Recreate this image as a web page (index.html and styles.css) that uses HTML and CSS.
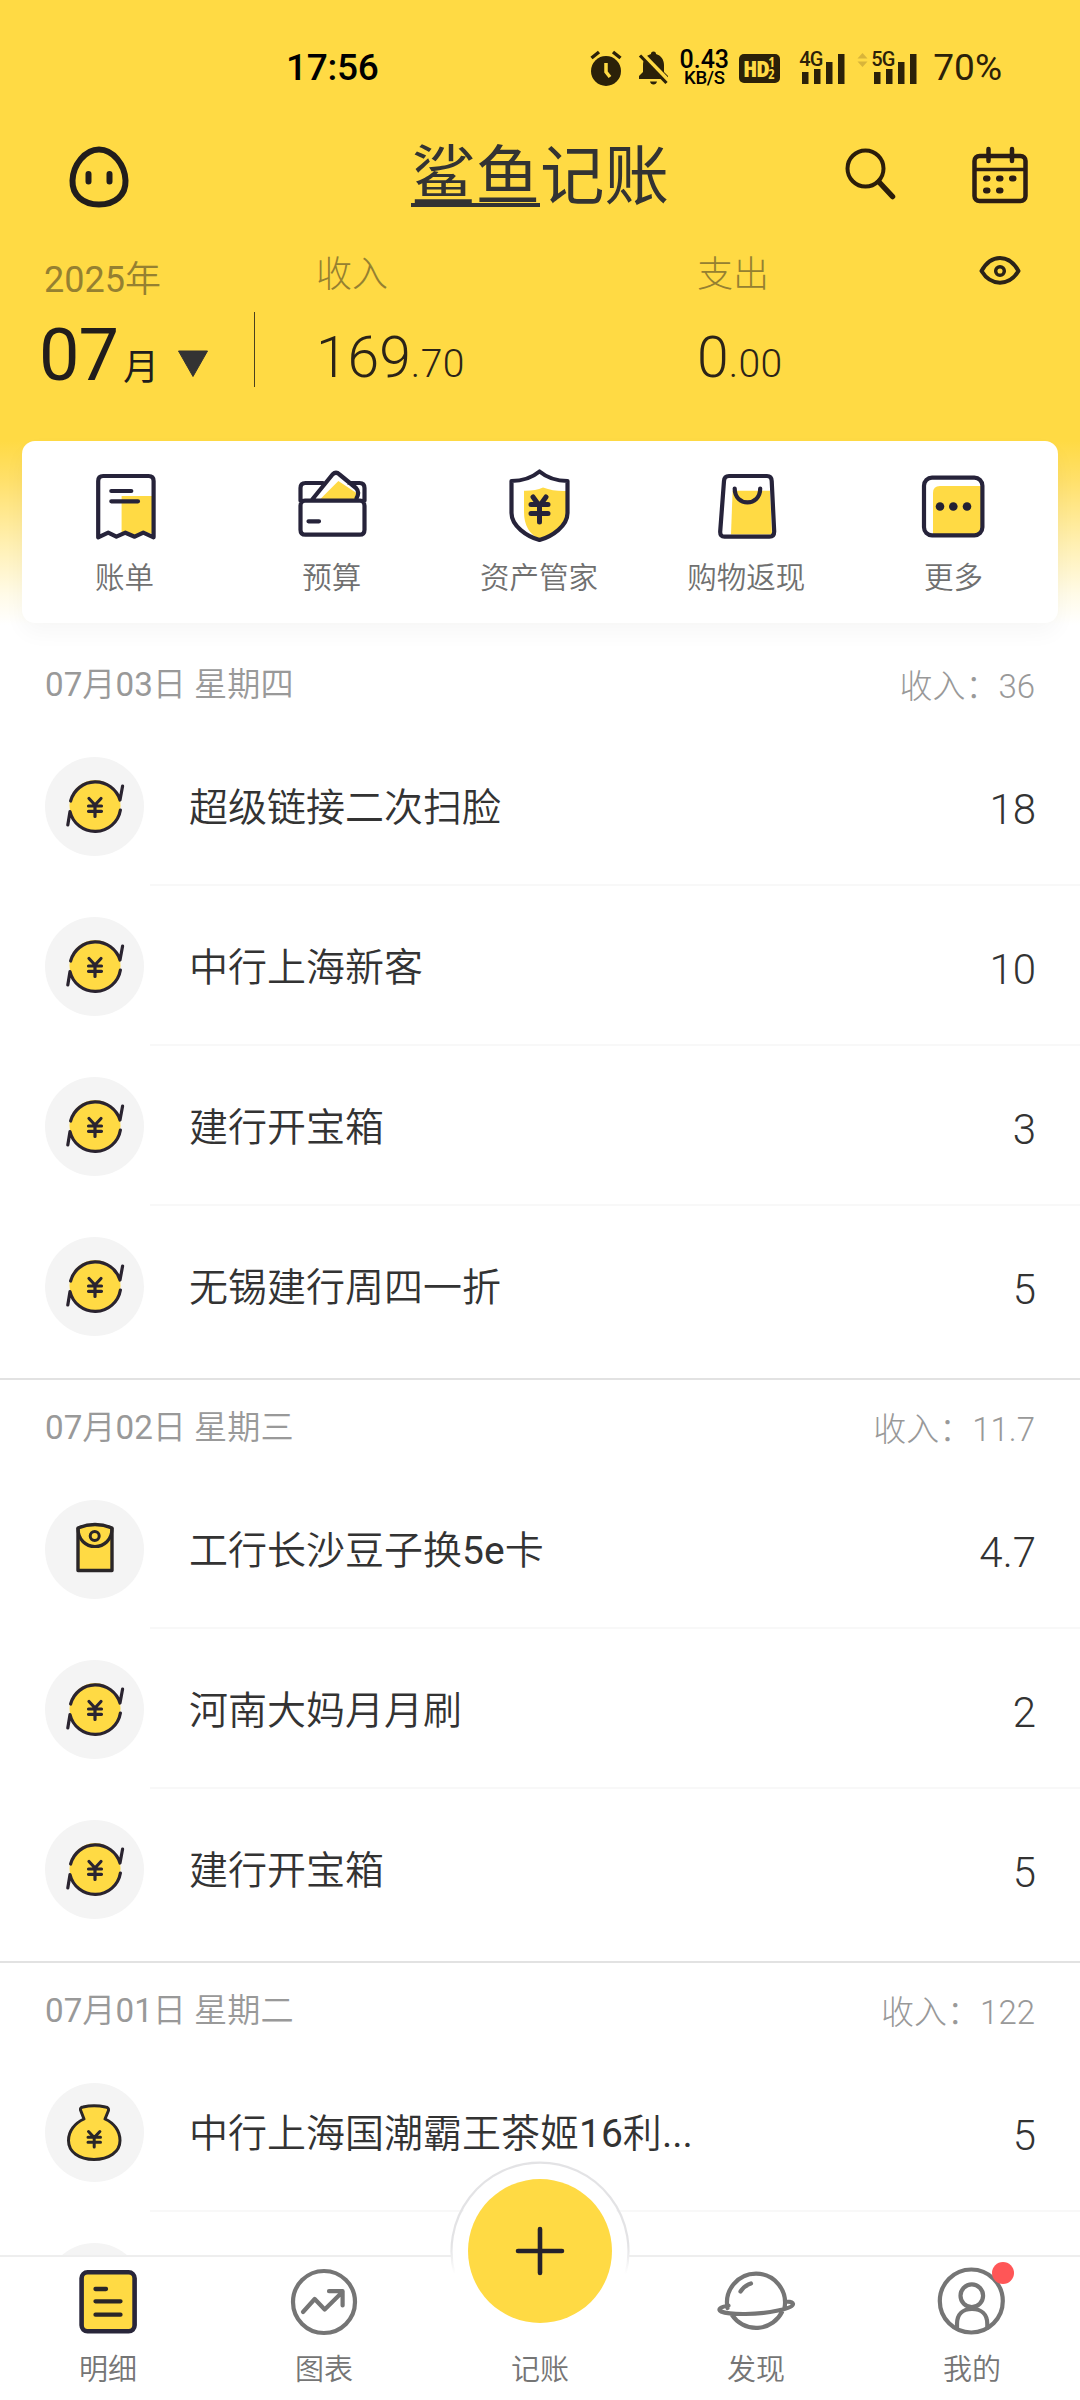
FILE: index.html
```html
<!DOCTYPE html>
<html lang="zh-CN">
<head>
<meta charset="utf-8">
<title>鲨鱼记账</title>
<link rel="stylesheet" href="styles.css">
</head>
<body>
<svg class="defs" aria-hidden="true">
  <symbol id="coin" viewBox="0 0 99 99">
    <circle cx="50" cy="48.5" r="25.5" fill="#ffda44"/>
    <path d="M25.6 44A25.7 25.7 0 0 1 75 43L77.6 29M22.8 68L25 54.5A25.7 25.7 0 0 0 75.4 53" fill="none" stroke="#2a2430" stroke-width="3.2" stroke-linecap="round" stroke-linejoin="round"/>
    <path d="M44 41.5l6 6.5 6-6.5M50 48v11.500M43.500 49h13M43.500 54.300h13" fill="none" stroke="#2a2430" stroke-width="3.200" stroke-linecap="round"/>
  </symbol>
  <symbol id="packet" viewBox="0 0 99 99">
    <path d="M33 28Q50 21 67 28V70.500H33Z" fill="#ffda44" stroke="#2a2628" stroke-width="3.400" stroke-linejoin="round"/>
    <path d="M33 28C33 40 41 46.500 50 46.500S67 40 67 28" fill="none" stroke="#2a2628" stroke-width="3.200"/>
    <circle cx="49.700" cy="36" r="4.500" fill="none" stroke="#2a2628" stroke-width="3"/>
  </symbol>
  <symbol id="bag" viewBox="0 0 99 99">
    <path d="M39 36L35.500 27Q35 24.500 38 24Q49 21.500 60.500 24Q64 24.500 63.500 27.500L60 36C69 40 75 48 75 57.500C75 69 64 76.500 49 76.500S23.500 69 23.500 57.500C23.500 48 30 40 39 36Z" fill="#ffda44" stroke="#2a2628" stroke-width="3" stroke-linejoin="round"/>
    <path d="M43.500 48.500l5.700 6 5.700-6M49.200 54.500v9.500M43 54.300h12.500M43 59.300h12.500" fill="none" stroke="#2a2628" stroke-width="3" stroke-linecap="round"/>
  </symbol>
</svg>

<div class="app">
  <header class="header">
    <div class="status">
      <div class="clock">17:56</div>
      <div class="status-icons">
        <svg width="32" height="36" viewBox="0 0 32 36"><circle cx="16" cy="21" r="15" fill="#2b2109"/><path d="M1.500 8L9 2M30.500 8L23 2" stroke="#2b2109" stroke-width="3.500"/><path d="M16 13v9l4 5" fill="none" stroke="#ffda44" stroke-width="3.500"/></svg>
        <svg class="bell" width="31" height="36" viewBox="0 0 31 36"><path d="M15.500 1.500c1.800 0 2.500 1 2.500 2.500 5 1.500 8 5.500 8 11v7l4 4v3H1v-3l4-4v-7c0-5.500 3-9.500 8-11 0-1.500.7-2.500 2.500-2.500zM12 31.500h7c-.5 2-1.500 3-3.500 3s-3-1-3.500-3z" fill="#2b2109"/><path d="M3.500 3L31 31" stroke="#ffda44" stroke-width="4"/><path d="M2 5.500L28.500 33" stroke="#2b2109" stroke-width="3.200"/></svg>
        <div class="speed"><b>0.43</b><span>KB/S</span></div>
        <div class="hd"><b>HD</b><span><i>1</i><i>2</i></span></div>
        <div class="signal"><span>4G</span><svg width="44" height="32" viewBox="0 0 44 32"><path d="M0 19h6.500v12H0zM12 16h6.500v15H12zM24 9h6.500v22H24zM36 1h6.500v30H36z" fill="#2b2109"/></svg></div>
        <svg class="arrows" width="11" height="16" viewBox="0 0 11 16"><path d="M5.500 1l5 5.500h-10zM5.500 15l5-5.500h-10z" fill="#d8b43a"/></svg>
        <div class="signal"><span>5G</span><svg width="44" height="32" viewBox="0 0 44 32"><path d="M0 19h6.500v12H0zM12 16h6.500v15H12zM24 9h6.500v22H24zM36 1h6.500v30H36z" fill="#2b2109"/></svg></div>
        <div class="battery">70%</div>
      </div>
    </div>

    <div class="titlebar">
      <svg class="face" width="62" height="62" viewBox="0 0 62 62"><path d="M31 3.500C45 3.500 57 19 57.500 34.500C58 49 47 58.500 31 58.500S4 49 4.500 34.500C5 19 17 3.500 31 3.500Z" fill="none" stroke="#211d1c" stroke-width="6"/><path d="M20.500 28v7.500M41.500 28v7.500" stroke="#211d1c" stroke-width="6" stroke-linecap="round"/></svg>
      <h1 class="logo"><span>鲨鱼</span>记账</h1>
      <svg class="search" width="56" height="56" viewBox="0 0 56 56"><circle cx="23.500" cy="22.500" r="18" fill="none" stroke="#2b1d0a" stroke-width="4"/><path d="M37 36L50.500 50.500" stroke="#2b1d0a" stroke-width="5.500" stroke-linecap="round"/></svg>
      <svg class="calendar" width="58" height="60" viewBox="0 0 58 60"><rect x="3.500" y="11" width="51" height="45" rx="5" fill="none" stroke="#2b1d14" stroke-width="4.500"/><path d="M3.500 24.500h51" stroke="#2b1d14" stroke-width="3.500"/><path d="M17.500 4v12M41 4v12" stroke="#2b1d14" stroke-width="4.500" stroke-linecap="round"/><path d="M15 33.500h1.500M28 33.500h1.500M41 33.500h1.500M15 45.500h1.500M28 45.500h1.500" stroke="#2b1d14" stroke-width="6" stroke-linecap="round"/></svg>
    </div>

    <div class="summary">
      <div class="month">
        <div class="year"><span class="num">2025</span>年</div>
        <div class="month-value"><strong>07</strong><span>月</span><svg width="32" height="28" viewBox="0 0 32 28"><path d="M1.500 1h29L16 26.500z" fill="#333" stroke="#333" stroke-linejoin="round"/></svg></div>
      </div>
      <div class="stat income"><span class="stat-label">收入</span><div class="stat-value">169<small>.70</small></div></div>
      <div class="stat"><span class="stat-label">支出</span><div class="stat-value">0<small>.00</small></div></div>
      <svg class="eye" width="44" height="32" viewBox="0 0 44 32"><path d="M3.500 16C13 -1.500 31 -1.500 40.500 16C31 31.500 13 31.500 3.500 16Z" fill="none" stroke="#2b2318" stroke-width="4" stroke-linejoin="round"/><circle cx="22" cy="16" r="4.300" fill="none" stroke="#2b2318" stroke-width="3.500"/></svg>
    </div>

    <nav class="shortcuts">
      <a class="shortcut">
        <svg viewBox="0 0 80 80"><path d="M35.600 30H66v38l-8.700-3-8.600 4-9.300-4-3.800 2z" fill="#ffda44"/><path d="M12.200 71.300V15q0-5 5-5H62.600q5 0 5 5V71.300L57.300 66.700L48.700 70.700L39.400 66.700L30.400 70.700L22.200 66.700Z" class="ln"/><path d="M25.300 25H45.300M25.300 35.300H52" class="ln"/></svg>
        <span>账单</span></a>
      <a class="shortcut">
        <svg viewBox="0 0 80 80"><path d="M45.400 15L27.400 33H62L63.500 27Z" fill="#ffda44"/><path d="M7.500 34.700V22q0-5 5-5H30M56 17h10.500q5 0 5 5v12.700M12 34.700H67q4.500 0 4.500 5V63.700q0 5-5 5H12.500q-5 0-5-5V39.500q0-4.800 4.500-4.800ZM18.800 34L39.500 8.500Q43 5 46.500 8.500L63 22Q67 26 63.600 32M15.500 55.300H26" class="ln"/></svg>
        <span>预算</span></a>
      <a class="shortcut">
        <svg viewBox="0 0 80 80"><path d="M24 24.700Q35 25 43 21.500Q54 25.500 66 25V46C66 61 51 70 40 73.500Q24 66 24 46Z" fill="#ffda44"/><path d="M39.500 5.500Q28 15 11.500 15V47C11.500 60 27 70.500 39.500 74C52 70.500 67.500 60 67.500 47V15Q51 15 39.500 5.500Z" class="ln"/><path d="M33 31l6.500 9 6.500-9M39.500 40v16M31 38.500h17M31 47.500h17" class="ln yen"/></svg>
        <span>资产管家</span></a>
      <a class="shortcut">
        <svg viewBox="0 0 80 80"><path d="M25.600 24.700H63L65 68.500H24Z" fill="#ffda44"/><path d="M22 10H60Q64.500 10 64.700 15L67.200 65.500Q67.200 70.700 62.500 70.700H17.500Q13 70.700 13.200 65.500L17 15Q17.300 10 22 10ZM27.700 22.500C27.700 41 53.200 41 53.200 22.500" class="ln"/></svg>
        <span>购物返现</span></a>
      <a class="shortcut">
        <svg viewBox="0 0 80 80"><path d="M26 20H67V68H19V27Q19 20 26 20Z" fill="#ffda44"/><rect x="10" y="11.700" width="58.400" height="57.600" rx="8" class="ln"/><g fill="#222033"><circle cx="26" cy="40.500" r="4.300"/><circle cx="39.300" cy="40.500" r="4.300"/><circle cx="53" cy="40.500" r="4.300"/></g></svg>
        <span>更多</span></a>
    </nav>
  </header>

  <main class="list">
    <section class="day">
      <div class="day-head"><span><span class="num">07</span>月<span class="num">03</span>日 星期四</span><span class="total">收入：36</span></div>
      <div class="row"><svg class="ico"><use href="#coin"/></svg><div class="row-body"><span class="name">超级链接二次扫脸</span><span class="amount">18</span></div></div>
      <div class="row"><svg class="ico"><use href="#coin"/></svg><div class="row-body"><span class="name">中行上海新客</span><span class="amount">10</span></div></div>
      <div class="row"><svg class="ico"><use href="#coin"/></svg><div class="row-body"><span class="name">建行开宝箱</span><span class="amount">3</span></div></div>
      <div class="row"><svg class="ico"><use href="#coin"/></svg><div class="row-body"><span class="name">无锡建行周四一折</span><span class="amount">5</span></div></div>
    </section>
    <section class="day">
      <div class="day-head"><span><span class="num">07</span>月<span class="num">02</span>日 星期三</span><span class="total">收入：11.7</span></div>
      <div class="row"><svg class="ico"><use href="#packet"/></svg><div class="row-body"><span class="name">工行长沙豆子换<span class="num">5e</span>卡</span><span class="amount">4.7</span></div></div>
      <div class="row"><svg class="ico"><use href="#coin"/></svg><div class="row-body"><span class="name">河南大妈月月刷</span><span class="amount">2</span></div></div>
      <div class="row"><svg class="ico"><use href="#coin"/></svg><div class="row-body"><span class="name">建行开宝箱</span><span class="amount">5</span></div></div>
    </section>
    <section class="day">
      <div class="day-head"><span><span class="num">07</span>月<span class="num">01</span>日 星期二</span><span class="total">收入：122</span></div>
      <div class="row"><svg class="ico"><use href="#bag"/></svg><div class="row-body"><span class="name">中行上海国潮霸王茶姬<span class="num">16</span>利<span class="num">...</span></span><span class="amount">5</span></div></div>
      <div class="row"><svg class="ico"></svg><div class="row-body"></div></div>
    </section>
  </main>

  <nav class="tabs">
    <a class="tab"><svg viewBox="0 0 80 80"><rect x="13.600" y="10.300" width="53" height="59" rx="6" fill="#ffda44" stroke="#29263a" stroke-width="4.600"/><path d="M27.500 27H38M27.500 39.300H52.500M27.500 52.700H52.500" stroke="#2a2628" stroke-width="4.300" stroke-linecap="round"/></svg><span>明细</span></a>
    <a class="tab"><svg viewBox="0 0 80 80" class="gray"><circle cx="40" cy="40" r="31"/><path d="M19 50L30.700 37L40.700 47.500L58.600 29.700M45 29.200H58.600V43.500"/></svg><span>图表</span></a>
    <a class="tab tab-add">
      <svg class="fab" width="182" height="120" viewBox="0 0 182 120"><defs><linearGradient id="fade" x1="0" y1="0" x2="0" y2="1"><stop offset=".75" stop-color="#e3e3e5"/><stop offset="1" stop-color="#fff"/></linearGradient></defs><path d="M5 116A88.500 88.500 0 1 1 177 116Z" fill="#fff"/><path d="M5.500 114A88.500 88.500 0 1 1 176.500 114" fill="none" stroke="url(#fade)" stroke-width="2.200"/></svg>
      <svg class="plus" width="144" height="144" viewBox="0 0 144 144"><circle cx="72" cy="72" r="72" fill="#ffda44"/><path d="M50 72H94M72 50V94" stroke="#25222c" stroke-width="4.600" stroke-linecap="round"/></svg>
      <span>记账</span></a>
    <a class="tab"><svg viewBox="0 0 80 80" class="gray"><path d="M11.500 46A29 29 0 1 1 68.500 46M16 53A29 29 0 0 0 66 50M12.500 43.500C4 45 1.500 47.500 5 49.500C14 53 42 53 62 48.500C72 46.500 77 44.500 77 42C76.500 39.500 72 39.500 69 39.700M24.500 29.500Q28.500 23.500 35 21.500"/></svg><span>发现</span></a>
    <a class="tab"><svg viewBox="0 0 80 80" class="gray"><circle cx="39.300" cy="39" r="31.500"/><circle cx="39.800" cy="33.700" r="11.300"/><path d="M25 66.500V62C25 52 31 47 40 47S55.300 52 55.300 62V66"/></svg><i class="badge"></i><span>我的</span></a>
  </nav>
</div>
</body>
</html>
```
FILE: styles.css
```css
* { box-sizing: border-box; }

body {
  margin: 0;
  background: #fff;
  color: #333;
  font-family: Roboto, "Noto Sans CJK SC", sans-serif;
}

svg { display: block; flex: none; }
i { font-style: normal; }
.defs { display: none; }
.num { font-weight: 400; }

.app {
  position: relative;
  width: 1080px;
  height: 2400px;
  overflow: hidden;
}

/* Header */
.header {
  height: 637px;
  padding: 0 22px;
  background: linear-gradient(#ffda44 0, #ffda44 441px, #ffe06a 480px, #fff0b3 545px, #fffbe8 595px, #fff 625px);
}

.status {
  display: flex;
  justify-content: space-between;
  height: 136px;
  padding: 0 56px 0 264px;
  align-items: center;
  color: #000;
}
.clock { font-size: 37px; font-weight: 500; line-height: 44px; letter-spacing: -.3px; }
.status-icons { display: flex; align-items: center; color: #2b2109; }
.bell { margin-left: 16px; }
.speed {
  display: flex;
  flex-direction: column;
  align-items: center;
  width: 52px;
  margin: 0 0 1px 9px;
  color: #000;
  font-weight: 500;
}
.speed b { font-size: 25px; font-weight: 500; line-height: 21px; }
.speed span { font-size: 18.500px; line-height: 17px; letter-spacing: -.3px; }
.hd {
  display: flex;
  align-items: center;
  width: 41px;
  height: 29px;
  margin-left: 9px;
  padding-left: 4px;
  border-radius: 5px;
  background: #2b2109;
  color: #ffda44;
  font: 700 23px/29px "Open Sans", sans-serif;
  font-stretch: 75%;
}
.hd b { width: 25px; letter-spacing: -1px; }
.hd span { display: flex; flex-direction: column; font-size: 14px; line-height: 12px; }
.signal { width: 47px; height: 34px; margin-left: 19px; font-weight: 500; }
.signal span { display: block; height: 0; font-size: 20px; line-height: 17px; letter-spacing: -1px; }
.signal svg { margin: 2px 0 0 3px; }
.arrows { align-self: center; margin: -17px 0 0 11px; }
.arrows + .signal { margin-left: 3px; }
.battery { margin-left: 15px; font-size: 37px; line-height: 44px; }

.titlebar { display: flex; height: 110px; padding-left: 46px; }
.face { margin-top: 10px; }
.logo {
  margin: 5px 0 0 281px;
  width: 260px;
  font-size: 64.500px;
  font-weight: 400;
  line-height: 72px;
  white-space: nowrap;
}
.logo span { display: inline-block; height: 66px; border-bottom: 4px solid #333; }
.search { margin: 10px 0 0 171px; }
.calendar { margin: 9px 0 0 73px; }

.summary { display: flex; height: 195px; }
.month { width: 233px; padding: 12px 0 0 22px; position: relative; }
.month::after {
  content: "";
  position: absolute;
  right: 0;
  top: 66px;
  width: 1.500px;
  height: 75px;
  background: #4a401f;
}
.year { font-size: 36px; font-weight: 350; line-height: 44px; color: #958031; }
.month-value { display: flex; align-items: baseline; height: 90px; margin-top: 9px; margin-left: -5px; color: #211d1c; }
.month-value strong { font-size: 72px; font-weight: 400; line-height: 90px; letter-spacing: -1px; }
.month-value span { margin-left: 5px; font-size: 36px; line-height: 44px; }
.month-value svg { margin-left: 18px; align-self: flex-start; margin-top: 39px; }
.stat { padding-top: 7px; width: 281px; }
.stat.income { width: 442px; padding-left: 61px; }
.stat-label { display: block; font-size: 36px; line-height: 44px; color: #958031; font-weight: 300; }
.stat-value { margin-top: 21px; font-size: 57px; font-weight: 300; line-height: 80px; color: #2b2318; }
.stat-value small { font-size: 39px; letter-spacing: .5px; }
.eye { margin-top: 9px; }

.shortcuts {
  display: flex;
  height: 182px;
  border-radius: 13px;
  background: #fff;
  box-shadow: 0 10px 22px rgba(0, 0, 0, .035);
}
.shortcut {
  flex: 1;
  display: flex;
  flex-direction: column;
  align-items: center;
  padding-top: 25px;
  color: #707070;
  font-size: 29.500px;
  line-height: 40px;
  font-weight: 350;
}
.shortcut svg { width: 80px; height: 80px; margin-bottom: 12px; }
.shortcut span { margin-right: 2px; }
.ln { fill: none; stroke: #26233a; stroke-width: 4.200; stroke-linecap: round; stroke-linejoin: round; }
.ln.yen { stroke-width: 5; }

/* Daily records */
.day { padding-bottom: 12px; border-bottom: 2px solid #e2e2e2; }
.day-head {
  display: flex;
  justify-content: space-between;
  height: 89px;
  padding: 26px 45px 0 45px;
  color: #999;
  font-size: 33.200px;
  font-weight: 350;
  line-height: 44px;
}
.total { padding-top: 2px; font-size: 33px; font-weight: 300; }
.row { display: flex; height: 160px; padding-left: 45px; }
.ico { width: 99px; height: 99px; margin: 31px 6px 0 0; border-radius: 50%; background: #f4f4f4; }
.row-body {
  flex: 1;
  display: flex;
  justify-content: space-between;
  align-items: flex-start;
  padding: 54px 44px 0 39px;
  border-bottom: 2px solid #f8f8f8;
}
.row:last-child .row-body { border-bottom: 0; }
.name { padding-top: 2px; font-size: 39px; line-height: 52px; font-weight: 350; }
.amount { font-size: 42px; line-height: 60px; font-weight: 300; }

/* Bottom tab bar */
.tabs {
  position: absolute;
  left: 0;
  bottom: 0;
  display: flex;
  width: 100%;
  height: 145px;
  border-top: 2px solid #eee;
  background: #fff;
}
.tab {
  position: relative;
  flex: 1;
  display: flex;
  flex-direction: column;
  align-items: center;
  padding-top: 5px;
  color: #757575;
  font-size: 29px;
  line-height: 40px;
  font-weight: 350;
}
.tab > svg { width: 80px; height: 80px; }
.tab > span { margin-top: 8px; }
.gray { fill: none; stroke: #757575; stroke-width: 4.200; stroke-linecap: round; stroke-linejoin: round; }
.tab-add { padding-top: 85px; }
.tab-add > .fab { position: absolute; top: -97px; left: 17px; width: 182px; height: 120px; }
.tab-add > .plus { position: absolute; top: -78px; left: 36px; width: 144px; height: 144px; }
.badge {
  position: absolute;
  left: 128px;
  top: 5px;
  width: 22px;
  height: 22px;
  border-radius: 50%;
  background: #ff5657;
}
```
